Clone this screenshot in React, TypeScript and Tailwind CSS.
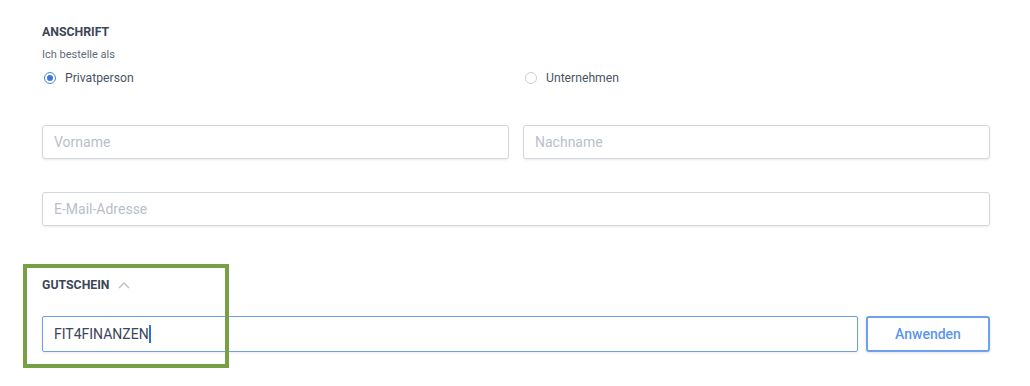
import React from 'react';

function Radio({ label, checked }: { label: string; checked?: boolean }) {
  return (
    <label className="flex items-center h-[20px] pl-[2px]">
      {checked ? (
        <span className="w-[12px] h-[12px] rounded-full border-[1.5px] border-[#4a85e0] flex items-center justify-center">
          <span className="w-[6px] h-[6px] rounded-full bg-[#3d78d8]" />
        </span>
      ) : (
        <span className="w-[12px] h-[12px] rounded-full border border-[#c9cfd8]" />
      )}
      <span className="ml-[9px] text-[12.2px] text-[#4a5566]">{label}</span>
    </label>
  );
}

function TextInput({ placeholder }: { placeholder: string }) {
  return (
    <input
      className="w-full h-[34px] px-[11px] text-[14px] border border-[#d2d7de] rounded-[3px] shadow-[0_1px_2px_rgba(0,0,0,0.08)] placeholder-[#b9c0ca] outline-none"
      placeholder={placeholder}
    />
  );
}

export default function App() {
  return (
    <div className="relative w-[1030px] h-[386px] bg-white font-['Roboto',sans-serif] overflow-hidden">
      <div className="pl-[42px] pr-[40px] pt-[24px]">
        <h2 className="text-[12.3px] leading-[16px] font-bold text-[#3b4658]">ANSCHRIFT</h2>
        <p className="mt-[8px] text-[11px] leading-[14px] text-[#5f6b7a]">Ich bestelle als</p>

        <div className="mt-[6px] grid grid-cols-2 gap-[14px]">
          <Radio label="Privatperson" checked />
          <Radio label="Unternehmen" />
        </div>

        <div className="mt-[37px] grid grid-cols-2 gap-[14px]">
          <TextInput placeholder="Vorname" />
          <TextInput placeholder="Nachname" />
        </div>

        <div className="mt-[33px]">
          <TextInput placeholder="E-Mail-Adresse" />
        </div>

        <div className="mt-[51px] flex items-center h-[16px]">
          <h2 className="text-[12.3px] leading-[16px] font-bold text-[#3b4658]">GUTSCHEIN</h2>
          <svg className="ml-[8px]" width="12" height="8" viewBox="0 0 12 8" fill="none">
            <path d="M1 7L6 2L11 7" stroke="#b9c0ca" strokeWidth="1.3" />
          </svg>
        </div>

        <div className="mt-[23px] flex gap-[8px]">
          <div className="flex-1 h-[36px] flex items-center px-[11px] border border-[#6f9fe8] rounded-[2px] shadow-[0_1px_3px_rgba(0,0,0,0.08)]">
            <span className="text-[14px] text-[#3b4658]">FIT4FINANZEN</span>
            <span className="w-[2px] h-[18px] bg-[#2f6fe0]" />
          </div>
          <button className="w-[124px] h-[36px] border-2 border-[#6ea0f0] rounded-[3px] text-[14px] font-medium text-[#5a96f0] shadow-[0_1px_3px_rgba(0,0,0,0.12)]">
            Anwenden
          </button>
        </div>
      </div>

      <div className="absolute left-[23px] top-[264px] w-[206px] h-[104px] border-4 border-[#76a043] pointer-events-none" />
    </div>
  );
}
